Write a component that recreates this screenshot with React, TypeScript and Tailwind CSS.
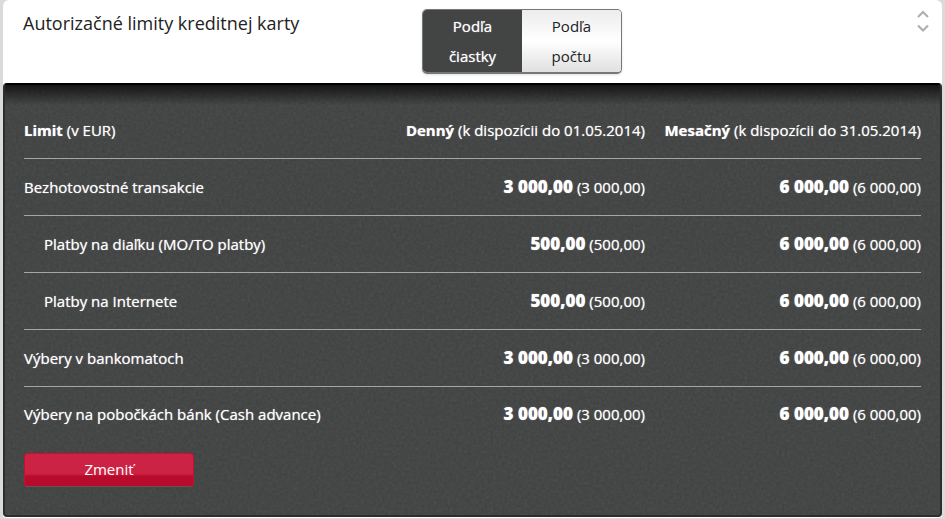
import { useState } from 'react';

type Row = { label: string; nested?: boolean; daily: string; monthly: string };

const ROWS: Row[] = [
  { label: 'Bezhotovostné transakcie',              daily: '3 000,00', monthly: '6 000,00' },
  { label: 'Platby na diaľku (MO/TO platby)',       daily: '500,00',   monthly: '6 000,00', nested: true },
  { label: 'Platby na Internete',                   daily: '500,00',   monthly: '6 000,00', nested: true },
  { label: 'Výbery v bankomatoch',                  daily: '3 000,00', monthly: '6 000,00' },
  { label: 'Výbery na pobočkách bánk (Cash advance)', daily: '3 000,00', monthly: '6 000,00' },
];

const MODES = [
  { id: 'amount', top: 'Podľa', bottom: 'čiastky' },
  { id: 'count',  top: 'Podľa', bottom: 'počtu' },
];

function Grain() {
  return (
    <svg aria-hidden="true" className="pointer-events-none absolute inset-0 h-full w-full opacity-10">
      <filter id="grain">
        <feTurbulence type="fractalNoise" baseFrequency="0.35" numOctaves="2" seed="4" />
        <feColorMatrix type="saturate" values="0" />
      </filter>
      <rect width="100%" height="100%" filter="url(#grain)" />
    </svg>
  );
}

function Amount({ value }: { value: string }) {
  return (
    <td className="text-right leading-5 whitespace-nowrap">
      <b className="text-[17px] leading-5 font-extrabold">{value}</b> ({value})
    </td>
  );
}

export default function App() {
  const [mode, setMode] = useState('amount');

  return (
    <div className="min-h-screen bg-[#dadada] px-[3px] pb-[3px] font-['Open_Sans',sans-serif]">
      <main className="rounded-t-md bg-white">
        <header className="grid h-[83px] grid-cols-[13fr_200px_10fr] items-start pt-[9px] pr-[13px] pl-[20px]">
          <h1 className="text-lg leading-7 whitespace-nowrap text-[#222]">Autorizačné limity kreditnej karty</h1>
          <div className="flex h-[65px] overflow-hidden rounded-[5px] border border-b-2 border-[#777] shadow-sm">
            {MODES.map(m => (
              <button key={m.id} type="button" aria-pressed={mode === m.id} onClick={() => setMode(m.id)}
                className={mode === m.id
                  ? 'flex-1 cursor-pointer bg-[#434544] text-[15px] leading-[30px] text-white text-shadow-[0_0_1px_#ffffffb0]'
                  : 'flex-1 cursor-pointer bg-linear-to-b from-[#ececec] via-white to-[#e0e0e0] text-[15px] leading-[30px] text-[#222]'}>
                {m.top}<br />{m.bottom}
              </button>
            ))}
          </div>
          <button type="button" aria-label="Presunúť" className="cursor-pointer justify-self-end text-[#b0b0b0]">
            <svg width="12" height="24" viewBox="0 0 12 24" fill="none" stroke="currentColor" strokeWidth="2.200">
              <path d="M1 8 6 3l5 5M1 16.500l5 5 5-5" />
            </svg>
          </button>
        </header>

        <section className="relative overflow-hidden rounded-[4px] border-2 border-[#2c2e2d] border-t-black bg-[#3f4140] px-[19px] pt-[17px] pb-[28px] text-[15px] text-white shadow-[0_1px_0_#fff] text-shadow-[0_0_1px_#ffffffb0]">
          <Grain />
          <div className="pointer-events-none absolute inset-x-0 top-0 h-5 bg-linear-to-b from-black/70 to-transparent" />
          <table className="relative w-full border-collapse">
            <thead>
              <tr className="h-[56px] border-b border-[#a5a5a5]">
                <th scope="col" className="text-left font-normal"><b>Limit</b> (v EUR)</th>
                <th scope="col" className="text-right font-normal whitespace-nowrap"><b>Denný</b> (k dispozícii do 01.05.2014)</th>
                <th scope="col" className="w-[276px] text-right font-normal whitespace-nowrap"><b>Mesačný</b> (k dispozícii do 31.05.2014)</th>
              </tr>
            </thead>
            <tbody>
              {ROWS.map(r => (
                <tr key={r.label} className="h-[57px] border-b border-[#a5a5a5] last:h-[55px] last:border-b-0">
                  <th scope="row" className={r.nested ? 'pl-5 text-left leading-5 font-normal' : 'text-left leading-5 font-normal'}>{r.label}</th>
                  <Amount value={r.daily} />
                  <Amount value={r.monthly} />
                </tr>
              ))}
            </tbody>
          </table>
          <button type="button"
            className="relative mt-3 block h-[34px] w-[170px] cursor-pointer rounded-[4px] border border-[#c80e35] border-b-[#6a5055] bg-linear-to-b from-[#cc2344] from-60% to-[#b80a2b] to-70% pb-px text-center">
            Zmeniť
          </button>
        </section>
      </main>
    </div>
  );
}
